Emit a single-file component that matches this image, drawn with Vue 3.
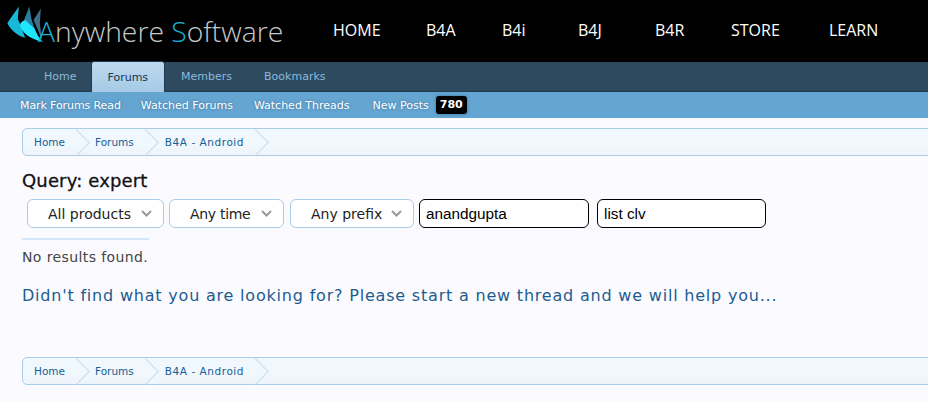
<script setup>
const mainNav = ['HOME', 'B4A', 'B4i', 'B4J', 'B4R', 'STORE', 'LEARN']
const tabs = ['Home', 'Forums', 'Members', 'Bookmarks']
const subs = ['Mark Forums Read', 'Watched Forums', 'Watched Threads']
const crumbs = ['Home', 'Forums', 'B4A - Android']
const filters = ['All products', 'Any time', 'Any prefix']
</script>

<template>
  <div class="page">
    <header class="top">
      <div class="logo">
        <svg class="mark" width="44" height="44" viewBox="0 0 42 42">
          <path d="M28 8 L23 21 L33 29 L30 20 Z" fill="#2a7f9e" />
          <path d="M39 10 L32 21 L36 30 L40 40 L38 24 Z" fill="#3e6f88" />
          <path d="M18 8 C14 14 10 19 7 24 C10 30 15 35 24 38 L20 27 L17 20 Z" fill="#17b8d8" />
          <path d="M24 21 C21 22 19 24 19 26 C21 33 28 39 41 42 C37 38 34 32 33 29 Z" fill="#1fe6ff" />
        </svg>
        <span class="wordmark"><b>A</b>nywhere <b>S</b>oftware</span>
      </div>
      <nav class="main-nav">
        <a v-for="item in mainNav" :key="item">{{ item }}</a>
      </nav>
    </header>

    <nav class="tabs">
      <a v-for="t in tabs" :key="t" :class="{ active: t === 'Forums' }">{{ t }}</a>
    </nav>

    <nav class="subs">
      <a v-for="s in subs" :key="s">{{ s }}</a>
      <a class="new-posts">New Posts <span class="badge">780</span></a>
    </nav>

    <main class="content">
      <div class="crumbs">
        <a v-for="c in crumbs" :key="c" class="crumb">{{ c }}</a>
      </div>
      <h1 class="query">Query: expert</h1>
      <div class="filters">
        <div v-for="f in filters" :key="f" class="select">
          <span>{{ f }}</span>
          <svg width="11" height="7" viewBox="0 0 11 7"><path d="M1 1 L5.5 5.5 L10 1" fill="none" stroke="#999" stroke-width="2" /></svg>
        </div>
        <input class="field first" value="anandgupta" />
        <input class="field second" value="list clv" />
      </div>
      <div class="rule"></div>
      <p class="none">No results found.</p>
      <p class="help">Didn't find what you are looking for? Please start a new thread and we will help you...</p>
      <div class="crumbs bottom">
        <a v-for="c in crumbs" :key="c" class="crumb">{{ c }}</a>
      </div>
    </main>
  </div>
</template>

<style>
html, body { margin: 0; overflow: hidden; background: #fbfbff; }
</style>

<style scoped>
.page { width: 928px; height: 402px; overflow: hidden; font-family: "DejaVu Sans", sans-serif; background: #fbfbff; }
.top { height: 62px; background: #000; display: flex; }
.logo { width: 333px; display: flex; align-items: flex-start; flex: none; }
.mark { margin: -2px 0 0 0; flex: none; }
.wordmark { font-family: "Open Sans", sans-serif; font-weight: 300; font-size: 28.3px; line-height: 36px; margin: 13px 0 0 -6px; color: #c4c8ca; white-space: nowrap; }
.wordmark b { font-weight: 300; color: #14b4d6; }
.main-nav { display: grid; grid-template-columns: 93px 76px 76px 77px 76px 98px auto; align-items: center; height: 60px; font-family: "Open Sans", sans-serif; font-size: 16px; color: #fff; }
.tabs { height: 30px; background: #2d4a5f; display: flex; padding-left: 28px; box-sizing: border-box; font-size: 11px; border-bottom: 1px solid #1d3a50; }
.tabs a { padding: 0 16px; line-height: 28px; margin-top: 1px; color: #8cb8dc; }
.tabs a.active { color: #1a3550; background: linear-gradient(#bcd8ee, #a6cbe6); border: 1px solid #1d3a50; border-bottom: 0; border-radius: 3px 3px 0 0; margin: -1px 0 -1px -1px; line-height: 31px; padding: 0 16px 0 15px; }
.subs { height: 26px; background: #65a5d1; display: flex; align-items: center; padding-left: 20px; gap: 20px; font-size: 11px; color: #fff; text-shadow: 0 0 3px #3a6f9a; }
.subs a:first-child { letter-spacing: -0.1px; }
.subs a:nth-child(3) { margin-left: 1px; }
.new-posts { display: flex; align-items: center; gap: 7px; margin-left: 3px; }
.badge { background: #000; border-radius: 3px; padding: 0 4px; line-height: 18px; font-weight: 700; text-shadow: none; box-shadow: 0 0 3px #3a6f9a; }
.content { padding: 10px 0 0 22px; }
.crumbs { width: 960px; height: 26px; display: flex; border: 1px solid #a9cde6; border-radius: 5px 0 0 5px; background: linear-gradient(#f0f7fd, #f0f7fd 60%, #eef4fa); font-size: 10.5px; color: #176093; }
.crumb { position: relative; line-height: 26px; padding: 0 24px 0 6px; white-space: nowrap; }
.crumb:first-child { padding-left: 11px; }
.crumb:last-child { letter-spacing: 0.55px; padding-left: 7px; }
.crumb::after { content: ""; position: absolute; right: 3px; top: 0; width: 18px; height: 18px; border-top: 1px solid #c5deef; border-right: 1px solid #c5deef; transform: translate(0, 4px) rotate(45deg); }
.query { margin: 14px 0 0; font-size: 18px; font-weight: 400; line-height: 21px; color: #111; -webkit-text-stroke: 0.3px #111; letter-spacing: 0.15px; }
.filters { display: flex; align-items: center; margin: 8px 0 0 5px; }
.select { height: 29px; box-sizing: border-box; border: 1px solid #a9cde6; border-radius: 6px; background: #fff; display: flex; align-items: center; justify-content: space-between; padding: 0 11px 0 20px; font-size: 14px; color: #222; white-space: nowrap; }
.select:nth-child(1) { width: 137px; margin-right: 5px; }
.select:nth-child(2) { width: 115px; margin-right: 6px; letter-spacing: -0.3px; }
.select:nth-child(3) { width: 124px; margin-right: 5px; }
.field { height: 29px; box-sizing: border-box; border: 1px solid #000; border-radius: 6px; background: #fff; padding: 0 6px; font-family: "Liberation Sans", sans-serif; font-size: 15.3px; color: #000; outline: none; }
.field.first { width: 170px; margin-right: 8px; }
.field.second { width: 169px; }
.rule { width: 127px; height: 2px; background: #d3e8f7; margin-top: 10px; }
.none { margin: 8px 0 0; font-size: 14px; line-height: 18px; color: #444; letter-spacing: 0.4px; }
.help { margin: 20px 0 0; font-size: 16px; line-height: 20px; color: #1d5c8f; white-space: nowrap; letter-spacing: 0.8px; }
.bottom { margin-top: 51px; }
</style>
